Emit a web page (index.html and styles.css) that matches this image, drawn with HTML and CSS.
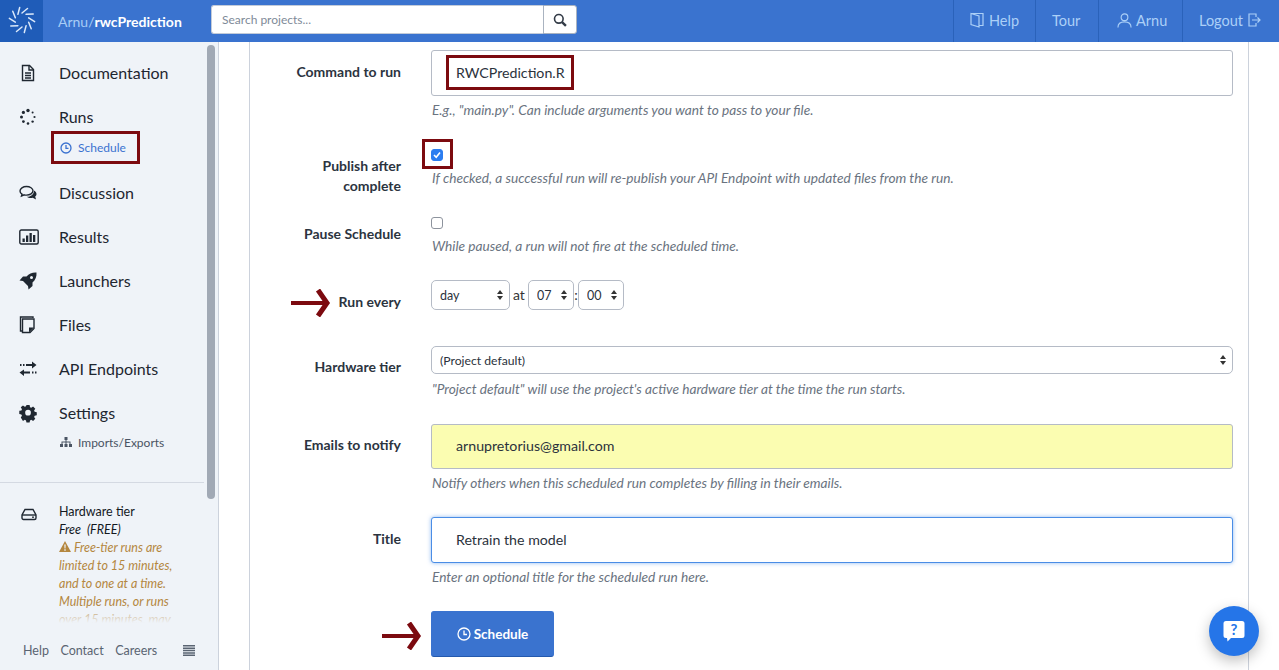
FILE: index.html
```html
<!DOCTYPE html>
<html lang="en">
<head>
<meta charset="utf-8">
<title>Schedule run</title>
<link rel="stylesheet" href="styles.css">
</head>
<body>
<header class="topbar">
  <a class="logo" href="#" aria-label="Home">
    <svg width="30" height="30" viewBox="0 0 30 30" class="logo-svg">
      <g>
        <line x1="15" y1="8" x2="20.500" y2="3.500"/>
        <line x1="15" y1="8" x2="20.500" y2="3.500" transform="rotate(36 15 15)"/>
        <line x1="15" y1="8" x2="20.500" y2="3.500" transform="rotate(72 15 15)"/>
        <line x1="15" y1="8" x2="20.500" y2="3.500" transform="rotate(108 15 15)"/>
        <line x1="15" y1="8" x2="20.500" y2="3.500" transform="rotate(144 15 15)"/>
        <line x1="15" y1="8" x2="20.500" y2="3.500" transform="rotate(180 15 15)"/>
        <line x1="15" y1="8" x2="20.500" y2="3.500" transform="rotate(216 15 15)"/>
        <line x1="15" y1="8" x2="20.500" y2="3.500" transform="rotate(252 15 15)"/>
        <line x1="15" y1="8" x2="20.500" y2="3.500" transform="rotate(288 15 15)"/>
        <line x1="15" y1="8" x2="20.500" y2="3.500" transform="rotate(324 15 15)"/>
      </g>
    </svg>
  </a>
  <div class="crumb"><span class="crumb-owner">Arnu/</span><strong>rwcPrediction</strong></div>
  <form class="search">
    <input class="search-input" type="text" placeholder="Search projects...">
    <button class="search-btn" type="button" aria-label="Search">
      <svg width="14" height="14" viewBox="0 0 13 13" class="stroke-icon"><circle cx="5.400" cy="5.400" r="4"/><line x1="8.400" y1="8.400" x2="12" y2="12" class="thick"/></svg>
    </button>
  </form>
  <nav class="topnav">
    <a href="#"><svg width="14" height="16" viewBox="0 0 14 16" class="stroke-icon"><path d="M1 1.500h12v12H9"/><path d="M1 1.500l8 2.500v11l-8-2.500z"/></svg>Help</a>
    <a href="#">Tour</a>
    <a href="#"><svg width="15" height="17" viewBox="0 0 16 17" class="stroke-icon"><circle cx="8" cy="5" r="3.600"/><path d="M1 16c0-4 3-6 7-6s7 2 7 6"/></svg>Arnu</a>
    <a href="#">Logout<svg width="13" height="14" viewBox="0 0 13 14" class="stroke-icon"><path d="M8 4V1H1v12h7v-3"/><path d="M4 7h8M9.500 4.500L12 7l-2.500 2.500"/></svg></a>
  </nav>
</header>

<div class="layout">
  <aside class="sidebar">
    <div class="scrollbar"></div>
    <nav class="side-nav">
      <a class="side-item" href="#">
        <svg class="side-icon" width="18" height="18" viewBox="0 0 18 18"><path class="outline" d="M3.500 1.500h7l4 4v11h-11z"/><path class="outline" d="M10 1.500v4.500h4.500M6 9h6M6 11.500h6M6 14h6"/></svg>
        <span>Documentation</span>
      </a>
      <a class="side-item" href="#">
        <svg class="side-icon" width="18" height="18" viewBox="0 0 18 18"><circle cx="9" cy="2.500" r="1.700"/><circle cx="4.400" cy="4.400" r="1.600"/><circle cx="2.500" cy="9" r="1.500"/><circle cx="4.400" cy="13.600" r="1.400"/><circle cx="9" cy="15.500" r="1.300"/><circle cx="13.600" cy="13.600" r="1.200"/><circle cx="15.500" cy="9" r="1.100"/><circle cx="13.600" cy="4.400" r="1"/></svg>
        <span>Runs</span>
      </a>
      <a class="side-sub side-sub-active" href="#">
        <svg width="12" height="12" viewBox="0 0 12 12" class="clock"><circle cx="6" cy="6" r="5"/><path d="M6 3v3.300h2.500"/></svg>
        <span>Schedule</span>
        <i class="mark mark-side"></i>
      </a>
      <a class="side-item" href="#">
        <svg class="side-icon" width="18" height="18" viewBox="0 0 18 18"><path class="outline" d="M7.500 2.500C4 2.500 1 4.500 1 7c0 1.300.8 2.400 2 3.200L2.500 12l2.700-1.200c.7.200 1.500.3 2.300.3 3.500 0 6.500-1.900 6.500-4.300S11 2.500 7.500 2.500z"/><path d="M15 6.500c1.500.8 2.500 2 2.500 3.400 0 1-.5 2-1.300 2.700l.8 2.900-3.300-1.700c-.7.200-1.300.3-2 .3-1.500 0-2.900-.5-3.900-1.300 3.800 0 7.200-2.300 7.200-6.300z"/></svg>
        <span>Discussion</span>
      </a>
      <a class="side-item" href="#">
        <svg class="side-icon" width="20" height="16" viewBox="0 0 20 16"><rect class="outline" x=".8" y="1" width="18.400" height="14" rx="1.500"/><path d="M3.500 9.500h2.300V13H3.500zM7 6.500h2.300V13H7zM10.500 4h2.300v9h-2.300zM14 6h2.300v7H14z"/></svg>
        <span>Results</span>
      </a>
      <a class="side-item" href="#">
        <svg class="side-icon" width="18" height="18" viewBox="0 0 18 18"><path d="M17.500.5c-4-.3-7.400 1-10 4H4L.5 8.500l3.500.5 5 5 .5 3.500 4-3.500v-3.500c3-2.600 4.300-6 4-10zM12.500 4a1.500 1.500 0 1 1 0 3 1.500 1.500 0 0 1 0-3z" fill-rule="evenodd"/></svg>
        <span>Launchers</span>
      </a>
      <a class="side-item" href="#">
        <svg class="side-icon" width="17" height="18" viewBox="0 0 17 18"><path class="outline" d="M3.500 1h10.500v1M3.500 1H1.500v14h2"/><path class="outline" d="M3.500 3H15v9.500L11 16.500H3.500z"/><path d="M10 11.500h5L10 16.500z"/></svg>
        <span>Files</span>
      </a>
      <a class="side-item" href="#">
        <svg class="side-icon" width="18" height="16" viewBox="0 0 18 16"><path d="M13 .5l4.500 3.500L13 7.500V5H7V3h6zM5 8.500v2h6v2H5v2.500L.5 11.500z"/><path d="M1 3h1.500v2H1zM4 3h1.500v2H4zM13 10.500h1.500v2H13zM16 10.500h1.500v2H16z"/></svg>
        <span>API Endpoints</span>
      </a>
      <a class="side-item" href="#">
        <svg class="side-icon" width="18" height="18" viewBox="0 0 18 18"><path fill-rule="evenodd" d="M7.300.5h3.400l.5 2.300 1.300.6 2-1.300 2.400 2.400-1.300 2 .6 1.300 2.300.5v3.400l-2.300.5-.6 1.300 1.300 2-2.400 2.400-2-1.300-1.300.6-.5 2.300H7.300l-.5-2.300-1.300-.6-2 1.300L1.100 14l1.300-2-.6-1.300L-.5 10.200V6.800l2.300-.5.600-1.300-1.300-2L3.500 1.100l2 1.300 1.300-.6zM9 5.700a3.100 3.100 0 1 0 0 6.200 3.100 3.100 0 0 0 0-6.200z" transform="translate(.75 .6) scale(.92)"/></svg>
        <span>Settings</span>
      </a>
      <a class="side-sub side-sub-last" href="#">
        <svg width="12" height="11" viewBox="0 0 12 11" class="sitemap"><path d="M4.500 0h3v3h-3zM0 7h3v3H0zM4.500 7h3v3h-3zM9 7h3v3H9zM5.500 3h1v1.500h4V7h-1V5.500H6.500V7h-1V5.500h-3V7h-1V4.500h4z"/></svg>
        <span>Imports/Exports</span>
      </a>
    </nav>
    <section class="tier">
      <svg class="tier-icon" width="16" height="13" viewBox="0 0 16 13"><path class="outline" d="M4 1.500h8l3 5.500v3a1.500 1.500 0 0 1-1.500 1.500h-11A1.500 1.500 0 0 1 1 10V7z"/><path class="outline" d="M1 7h14"/><circle cx="12" cy="9.200" r=".9"/></svg>
      <div class="tier-text">
        <div>Hardware tier</div>
        <div class="tier-name">Free&nbsp; (FREE)</div>
        <div class="tier-warn"><svg width="12" height="11" viewBox="0 0 12 11"><path fill-rule="evenodd" d="M6 0l6 11H0zM5.300 3.500h1.400l-.2 4h-1zM5.300 8.300h1.400v1.400H5.300z"/></svg> Free-tier runs are limited to 15 minutes, and to one at a time. Multiple runs, or runs over 15 minutes, may</div>
      </div>
    </section>
    <footer class="side-foot">
      <a href="#">Help</a><a href="#">Contact</a><a href="#">Careers</a>
      <svg width="12" height="11" viewBox="0 0 12 11" class="bars"><path d="M0 0h12v1.500H0zM0 2.400h12v1.500H0zM0 4.800h12v1.500H0zM0 7.200h12v1.500H0zM0 9.500h12V11H0z"/></svg>
    </footer>
  </aside>

  <main class="main">
    <div class="card">
      <div class="row row-command">
        <label class="lbl lbl-input">Command to run</label>
        <div class="field">
          <div class="mark-wrap">
            <input class="text" type="text" value="RWCPrediction.R">
            <i class="mark mark-command"></i>
          </div>
          <p class="help">E.g., "main.py". Can include arguments you want to pass to your file.</p>
        </div>
      </div>

      <div class="row row-publish">
        <label class="lbl lbl-check">Publish after<br>complete</label>
        <div class="field">
          <div class="mark-wrap">
            <input class="check" type="checkbox" checked>
            <i class="mark mark-check"></i>
          </div>
          <p class="help help-check">If checked, a successful run will re-publish your API Endpoint with updated files from the run.</p>
        </div>
      </div>

      <div class="row row-pause">
        <label class="lbl lbl-check">Pause Schedule</label>
        <div class="field">
          <input class="check" type="checkbox">
          <p class="help help-check">While paused, a run will not fire at the scheduled time.</p>
        </div>
      </div>

      <div class="row row-every">
        <svg class="arrow arrow-every" width="40" height="28" viewBox="0 0 40 28"><path d="M0 14h36"/><path d="M27 1l9 13-9 13" class="head"/></svg>
        <label class="lbl lbl-every">Run every</label>
        <div class="field field-inline">
          <select class="sel sel-unit"><option>day</option></select>
          <span class="sep-at">at</span>
          <select class="sel sel-num"><option>07</option></select>
          <span class="sep-colon">:</span>
          <select class="sel sel-num"><option>00</option></select>
        </div>
      </div>

      <div class="row row-hardware">
        <label class="lbl lbl-tight">Hardware tier</label>
        <div class="field">
          <select class="sel sel-wide"><option>(Project default)</option></select>
          <p class="help help-hardware">"Project default" will use the project's active hardware tier at the time the run starts.</p>
        </div>
      </div>

      <div class="row row-emails">
        <label class="lbl lbl-tight">Emails to notify</label>
        <div class="field">
          <input class="text text-yellow" type="text" value="arnupretorius@gmail.com">
          <p class="help">Notify others when this scheduled run completes by filling in their emails.</p>
        </div>
      </div>

      <div class="row row-title">
        <label class="lbl lbl-input">Title</label>
        <div class="field">
          <input class="text text-focus" type="text" value="Retrain the model">
          <p class="help">Enter an optional title for the scheduled run here.</p>
        </div>
      </div>

      <div class="row row-submit">
        <svg class="arrow arrow-submit" width="40" height="28" viewBox="0 0 40 28"><path d="M0 14h36"/><path d="M27 1l9 13-9 13" class="head"/></svg>
        <span></span>
        <div class="field">
          <button class="primary" type="button">
            <svg width="14" height="14" viewBox="0 0 14 14" class="clock"><circle cx="7" cy="7" r="6"/><path d="M7 3.500v4h3"/></svg>
            Schedule
          </button>
        </div>
      </div>
    </div>
  </main>
</div>

<button class="fab" type="button" aria-label="Help">
  <svg width="24" height="24" viewBox="0 0 24 24"><path d="M4 2h16a2.500 2.500 0 0 1 2.500 2.500v12A2.500 2.500 0 0 1 20 19H9l-3.500 3.500L5 19H4a2.500 2.500 0 0 1-2.500-2.500v-12A2.500 2.500 0 0 1 4 2z" fill="#fff"/><text x="12" y="15.500" text-anchor="middle" class="fab-q">?</text></svg>
</button>
</body>
</html>
```

FILE: styles.css
```css
* { box-sizing: border-box; }
html, body { margin: 0; height: 670px; overflow: hidden; }
body { font-family: Lato, "Liberation Sans", sans-serif; color: #1e2630; background: #fff; position: relative; }
a { text-decoration: none; color: inherit; }
p { margin: 0; }

.topbar { height: 42px; background: #3a73cf; display: flex; align-items: stretch; }
.logo { width: 43px; background: #1f5cb8; display: flex; align-items: center; justify-content: center; padding-bottom: 2px; }
.logo-svg line { stroke: #dbe9fa; stroke-width: 1.500; stroke-linecap: round; }
.crumb { margin-left: 15px; width: 153px; align-self: center; font-size: 14px; color: #fff; white-space: nowrap; }
.crumb-owner { color: #a8cdf6; }
.crumb strong { font-weight: 700; }
.search { display: flex; margin-top: 5px; width: 366px; height: 29px; }
.search-input { flex: 1; min-width: 0; height: 29px; border: 1px solid #c3cbd8; border-right: 0; border-radius: 3px 0 0 3px; padding: 0 10px; font: 12px Lato, sans-serif; }
.search-input::placeholder { color: #808a98; opacity: 1; }
.search-btn { width: 34px; height: 29px; padding: 0; background: #fff; border: 1px solid #aab3c0; border-radius: 0 3px 3px 0; display: flex; align-items: center; justify-content: center; }
.search-btn .stroke-icon { stroke: #333b47; stroke-width: 1.500; }
.stroke-icon { fill: none; stroke: currentColor; stroke-width: 1.200; flex: none; }
.stroke-icon .thick { stroke-width: 2.200; }
.topnav { margin-left: auto; display: flex; color: #acd0f7; font-size: 14.500px; }
.topnav a { display: flex; align-items: center; gap: 5px; padding: 0 16px 2px; border-left: 1px solid #2a62ba; }
.topnav a:nth-child(1) { width: 82px; }
.topnav a:nth-child(2) { width: 63px; }
.topnav a:nth-child(3) { width: 84px; padding-left: 18px; gap: 4px; }
.topnav a:nth-child(4) { width: 97px; }

.layout { display: flex; height: 628px; }
.sidebar { width: 219px; flex: none; background: #eff3f8; border-right: 1px solid #ccd2dc; display: flex; flex-direction: column; position: relative; }
.scrollbar { position: absolute; left: 207px; top: 3px; width: 8px; height: 454px; background: #a1a9b5; border-radius: 4px; }
.side-nav { height: 441px; padding-top: 9px; width: 204px; border-bottom: 1px solid #d4d9e2; flex: none; }
.side-item { display: grid; grid-template-columns: 40px 1fr; align-items: center; height: 44px; font-size: 16px; line-height: 42px; color: #1e2630; padding-left: 19px; }
.side-icon { fill: #1f2731; overflow: visible; }
.outline { fill: none; stroke: #1f2731; stroke-width: 1.400; }
.side-sub { display: flex; align-items: flex-start; gap: 6px; height: 32px; font-size: 12px; line-height: 16px; padding-left: 60px; color: #4a5463; position: relative; }
.side-sub svg { margin-top: 2px; }
.side-sub-last { height: 17px; }
.side-sub-active { color: #3b72d0; padding-top: 1px; }
.clock { fill: none; stroke: currentColor; stroke-width: 1.300; flex: none; }
.sitemap { fill: #4a5463; flex: none; }

.mark { position: absolute; display: block; border: 3px solid #7c0a0f; pointer-events: none; }
.mark-side { left: 51px; top: -8px; width: 89px; height: 33px; }
.mark-wrap { position: relative; }
.mark-command { left: 15px; top: 5px; width: 128px; height: 35px; }
.mark-check { left: -9px; top: -10px; width: 31px; height: 30px; }

.tier { flex: none; display: flex; height: 142px; padding: 20px 0 0 21px; overflow: hidden; position: relative; font-size: 12.500px; line-height: 18px; }
.tier::after { content: ""; position: absolute; left: 0; right: 0; bottom: 0; height: 20px; background: linear-gradient(rgba(239,243,248,0), #eff3f8 90%); }
.tier-icon { flex: none; margin: 5px 22px 0 0; fill: #1f2731; }
.tier-text { width: 128px; color: #14191f; }
.tier-name { font-style: italic; }
.tier-warn { font-style: italic; color: #b4873f; }
.tier-warn svg { fill: #b4873f; }
.side-foot { flex: 1; display: flex; align-items: center; padding: 6px 23px 0 23px; font-size: 12.500px; color: #5a6472; }
.side-foot a { margin-right: 11.500px; }
.bars { margin-left: auto; fill: #5a6472; }

.main { flex: 1; min-width: 0; padding: 0 30px; overflow: hidden; }
.card { border-left: 1px solid #ccd2dc; border-right: 1px solid #ccd2dc; height: 700px; padding: 8px 15px 0 0; }
.row { display: grid; grid-template-columns: 151px 802px; column-gap: 30px; position: relative; }
.lbl { font-size: 14px; font-weight: 700; line-height: 20px; text-align: right; color: #2c343f; }
.lbl-input { padding-top: 12px; }
.lbl-check { padding-top: 7px; }
.lbl-every { padding-top: 12px; }
.lbl-tight { padding-top: 11px; }
.field { min-width: 0; }
.field-inline { display: flex; align-items: flex-start; font-size: 14px; line-height: 30px; color: #333; }
.help { font-size: 13.700px; line-height: 18px; font-style: italic; color: #6a7380; margin: 5px 0 0 1px; white-space: nowrap; }
.help-check { margin-top: 8px; }
.help-hardware { margin-top: 6px; }
.text { display: block; width: 100%; height: 46px; border: 1px solid #b5bbc6; border-radius: 3px; padding: 0 24px 2px; font: 14.200px Lato, sans-serif; color: #2b323c; background: #fff; }
.text-yellow { background: #fbfdb1; height: 45px; }
.text-focus { border-color: #4a8de6; box-shadow: 0 0 4px rgba(70,140,230,.6); }
.check { appearance: none; -webkit-appearance: none; display: block; width: 12px; height: 12px; margin: 0; border: 1px solid #8d939d; border-radius: 3px; background: #fff; }
.check:checked { border-color: #2b7df0; background: #2b7df0 url("data:image/svg+xml,%3Csvg xmlns='http://www.w3.org/2000/svg' width='10' height='10' viewBox='0 0 10 10'%3E%3Cpath d='M2 5l2.200 2.200L8 2.500' fill='none' stroke='%23fff' stroke-width='1.600'/%3E%3C/svg%3E") center no-repeat; }
.sel { appearance: none; -webkit-appearance: none; height: 30px; border: 1px solid #b5bbc6; border-radius: 5px; padding: 0 8px; font: 12.500px Lato, sans-serif; color: #2b323c; background: #fff url("data:image/svg+xml,%3Csvg xmlns='http://www.w3.org/2000/svg' width='8' height='12' viewBox='0 0 8 12'%3E%3Cpath d='M4 1l3 4H1zM4 11L1 7h6z' fill='%23333'/%3E%3C/svg%3E") right 5px center no-repeat; }
.sel-unit { width: 79px; }
.sel-num { width: 46px; }
.sel-wide { display: block; width: 100%; height: 28px; font-size: 12.200px; }
.sep-at { margin: 0 3px; width: 12px; }
.sep-colon { width: 4px; text-align: center; }

.row-publish { margin-top: 30px; }
.row-pause { margin-top: 21px; }
.row-every { margin-top: 25px; }
.row-hardware { margin-top: 34px; }
.row-emails { margin-top: 26px; }
.row-title { margin-top: 25px; }
.row-submit { margin-top: 25px; }

.arrow { position: absolute; fill: none; stroke: #7c0a0f; stroke-width: 4; }
.arrow .head { stroke-width: 5; }
.arrow-every { left: 41px; top: 9px; }
.arrow-submit { left: 132px; top: 11px; }

.primary { width: 123px; height: 46px; display: flex; align-items: center; justify-content: center; gap: 3px; background: #3a73cf; color: #fff; border: 1px solid #3a73cf; border-bottom-color: #2459ad; border-radius: 3px; font: 700 13.500px Lato, sans-serif; padding: 0; }

.fab { position: absolute; left: 1209px; top: 606px; width: 50px; height: 50px; border-radius: 50%; border: 0; padding: 0; background: #2575e8; box-shadow: 0 5px 14px rgba(0,0,0,.25); display: flex; align-items: center; justify-content: center; }
.fab-q { font: 700 15px Lato, sans-serif; fill: #2575e8; }
```
